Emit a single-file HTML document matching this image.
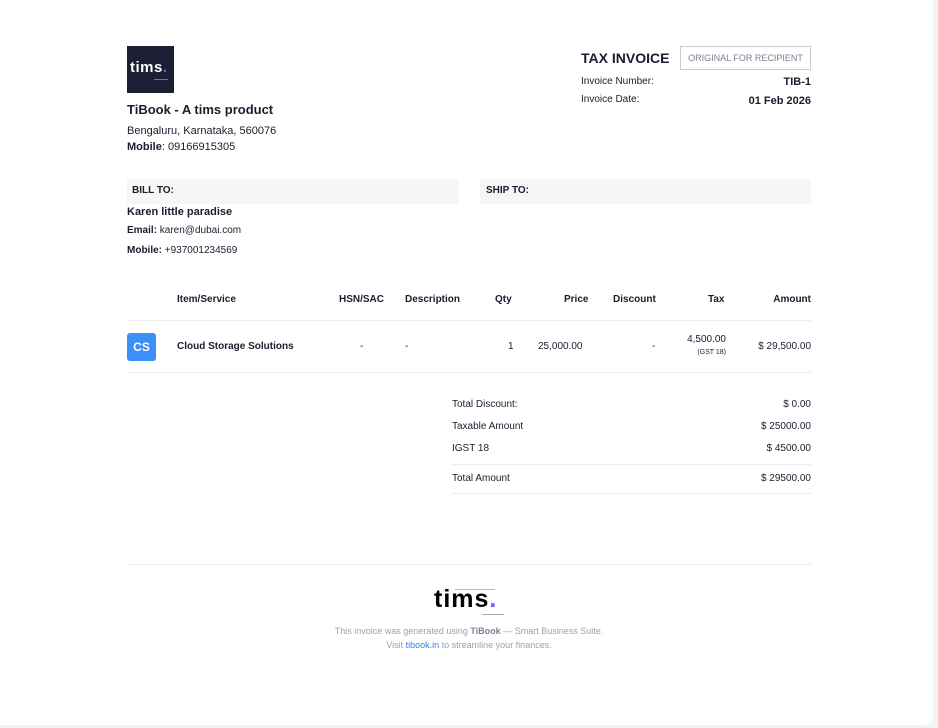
<!DOCTYPE html>
<html><head><meta charset="utf-8">
<style>
*{margin:0;padding:0;box-sizing:border-box}
body{width:938px;height:728px;background:#f3f3f5;font-family:"Liberation Sans",sans-serif;color:#1a1d2e;position:relative;overflow:hidden}
.card{position:absolute;left:0;top:0;width:933px;height:725px;background:#fff;border-radius:0 0 8px 0}
.a{position:absolute;white-space:nowrap}
.f11{font-size:11px}
.f10{font-size:10px}
.b{font-weight:bold}
.line{position:absolute;height:1px;background:#ececef}
</style></head><body>
<div class="card">
<div class="a" style="left:127px;top:46px;width:47px;height:47px;background:#1c1f33"></div>
<div class="a b" style="left:130px;top:59px;font-size:15px;color:#fff;letter-spacing:0.5px">tims<span style="color:#6b5cff">.</span></div>
<div class="a" style="left:154px;top:79px;width:14px;height:1px;background:#777"></div>
<div class="a b" style="left:127px;top:102px;font-size:13px">TiBook - A tims product</div>
<div class="a f11" style="left:127px;top:125px">Bengaluru, Karnataka, 560076</div>
<div class="a f11" style="left:127px;top:141px"><b>Mobile</b>: 09166915305</div>

<div class="a b" style="left:581px;top:50px;font-size:14px">TAX INVOICE</div>
<div class="a" style="left:680px;top:46px;width:131px;height:24px;border:1px solid #c9ccd6;font-size:9px;color:#7b8094;text-align:center;line-height:22px">ORIGINAL FOR RECIPIENT</div>
<div class="a f10" style="left:581px;top:76px">Invoice Number:</div>
<div class="a b f11" style="right:122px;top:76px">TIB-1</div>
<div class="a f10" style="left:581px;top:94px">Invoice Date:</div>
<div class="a b f11" style="right:122px;top:95px">01 Feb 2026</div>

<div class="a" style="left:127px;top:179px;width:331px;height:25px;background:#f6f6f7"></div>
<div class="a b f10" style="left:132px;top:185px">BILL TO:</div>
<div class="a" style="left:480px;top:179px;width:331px;height:25px;background:#f6f6f7"></div>
<div class="a b f10" style="left:486px;top:185px">SHIP TO:</div>
<div class="a b f11" style="left:127px;top:206px">Karen little paradise</div>
<div class="a f10" style="left:127px;top:225px"><b>Email:</b> karen@dubai.com</div>
<div class="a f10" style="left:127px;top:245px"><b>Mobile:</b> +937001234569</div>

<div class="a b f10" style="left:177px;top:294px">Item/Service</div>
<div class="a b f10" style="left:339px;top:294px">HSN/SAC</div>
<div class="a b f10" style="left:405px;top:294px">Description</div>
<div class="a b f10" style="left:495px;top:294px">Qty</div>
<div class="a b f10" style="left:564px;top:294px">Price</div>
<div class="a b f10" style="left:613px;top:294px">Discount</div>
<div class="a b f10" style="left:708px;top:294px">Tax</div>
<div class="a b f10" style="right:122px;top:294px">Amount</div>
<div class="line" style="left:127px;top:320px;width:684px"></div>
<div class="a b" style="left:127px;top:333px;width:29px;height:28px;background:#3b8ff6;border-radius:3px;color:#fff;font-size:12px;text-align:center;line-height:28px">CS</div>
<div class="a b f10" style="left:177px;top:341px">Cloud Storage Solutions</div>
<div class="a f10" style="left:360px;top:341px">-</div>
<div class="a f10" style="left:405px;top:341px">-</div>
<div class="a f10" style="left:508px;top:341px">1</div>
<div class="a f10" style="left:538px;top:341px">25,000.00</div>
<div class="a f10" style="left:652px;top:341px">-</div>
<div class="a f10" style="right:207px;top:334px">4,500.00</div>
<div class="a" style="right:207px;top:349px;font-size:7px">(GST 18)</div>
<div class="a f10" style="right:122px;top:341px">$ 29,500.00</div>
<div class="line" style="left:127px;top:372px;width:684px"></div>

<div class="a f10" style="left:452px;top:399px">Total Discount:</div>
<div class="a f10" style="right:122px;top:399px">$ 0.00</div>
<div class="a f10" style="left:452px;top:421px">Taxable Amount</div>
<div class="a f10" style="right:122px;top:421px">$ 25000.00</div>
<div class="a f10" style="left:452px;top:443px">IGST 18</div>
<div class="a f10" style="right:122px;top:443px">$ 4500.00</div>
<div class="line" style="left:452px;top:464px;width:359px"></div>
<div class="a f10" style="left:452px;top:473px">Total Amount</div>
<div class="a f10" style="right:122px;top:473px">$ 29500.00</div>
<div class="line" style="left:452px;top:493px;width:359px"></div>

<div class="line" style="left:127px;top:564px;width:684px"></div>
<div class="a" style="left:455px;top:589px;width:40px;height:1px;background:#bbb"></div>
<div class="a b" style="left:434px;top:585px;font-size:25px;color:#000;letter-spacing:1px">tims<span style="color:#6b5cff">.</span></div>
<div class="a" style="left:482px;top:614px;width:22px;height:1px;background:#aaa"></div>
<div class="a" style="left:0;width:938px;top:626px;text-align:center;font-size:9px;color:#9a9fb0">This invoice was generated using <b style="color:#7b8094">TiBook</b> — Smart Business Suite.</div>
<div class="a" style="left:0;width:938px;top:640px;text-align:center;font-size:9px;color:#9a9fb0">Visit <span style="color:#2f80ed">tibook.in</span> to streamline your finances.</div>
</div>
</body></html>
